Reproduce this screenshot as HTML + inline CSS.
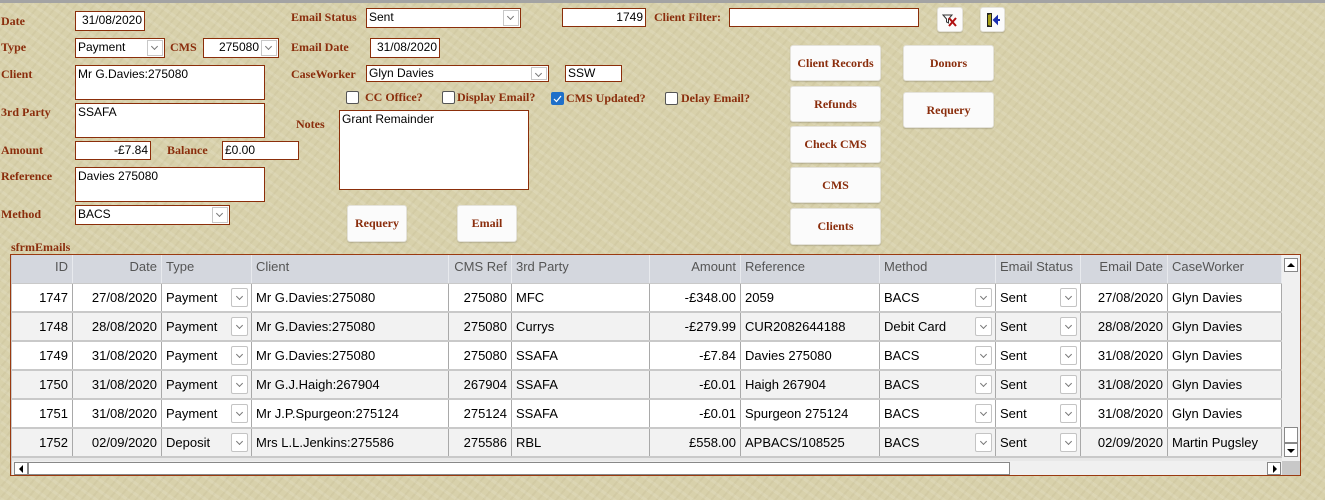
<!DOCTYPE html>
<html><head><meta charset="utf-8">
<style>
*{box-sizing:border-box;margin:0;padding:0}
body{width:1325px;height:500px;overflow:hidden;position:relative;background:#d8d1ab;font-family:"Liberation Sans",sans-serif;}
body:before{content:"";position:absolute;inset:0;background:repeating-linear-gradient(35deg,rgba(255,255,255,.10) 0 3px,rgba(0,0,0,0) 3px 9px),repeating-linear-gradient(-50deg,rgba(120,100,60,.06) 0 2px,rgba(0,0,0,0) 2px 7px);}
.a{position:absolute}
.lbl{position:absolute;font-family:"Liberation Serif",serif;font-weight:bold;font-size:12px;color:#8a2d0c;white-space:nowrap}
.box{position:absolute;background:#fff;border:1px solid #8b2e0a;font-size:12px;color:#000;padding:1px 2px;white-space:nowrap;overflow:hidden}
.r{text-align:right}
.dd{position:absolute;right:1px;top:1px;bottom:1px;width:16px;border:1px solid #c8c8c8;background:#fff}
.dd:after,.cdd:after{content:"";position:absolute;left:4px;top:3px;width:4px;height:4px;border-right:1px solid #777;border-bottom:1px solid #777;transform:rotate(45deg)}
.btn{position:absolute;background:#fbfbfb;border:1px solid #e4e2da;border-radius:3px;font-family:"Liberation Serif",serif;font-weight:bold;font-size:12px;color:#8a2d0c;display:flex;align-items:center;justify-content:center;box-shadow:0 1px 1px rgba(0,0,0,.15)}
.cb{position:absolute;width:13px;height:13px;background:#fff;border:1px solid #555;border-radius:2px}
.grid{position:absolute;left:10px;top:254px;width:1291px;height:222px;border:1px solid #9a3a10;background:#c9c9c9}
.row{position:absolute;left:1px;height:27px;display:flex;font-size:13px;color:#000}
.row div{border-right:1px solid #a9a9a9;height:100%;line-height:27px;padding:0 4px;white-space:nowrap;overflow:hidden;position:relative}
.hdr{top:0;height:28px;background:#d4d7de;color:#555}
.hdr div{line-height:24px;border-right:1px solid #e8eaee}
.cdd{position:absolute;right:3px;top:4px;width:17px;height:19px;border:1px solid #c4c4c4;background:#fff;border-radius:2px}
.cdd:after{left:5px;top:5px}
</style></head><body>
<div class="a" style="left:0;top:0;width:1325px;height:3px;background:#a3a3a3"></div>

<div class="lbl" style="left:1px;top:14px">Date</div>
<div class="box r" style="left:75px;top:11px;width:70px;height:20px">31/08/2020</div>
<div class="lbl" style="left:1px;top:40px">Type</div>
<div class="box" style="left:75px;top:38px;width:90px;height:20px">Payment<span class="dd"></span></div>
<div class="lbl" style="left:170px;top:40px">CMS</div>
<div class="box r" style="left:203px;top:38px;width:76px;height:20px;padding-right:19px">275080<span class="dd"></span></div>
<div class="lbl" style="left:1px;top:67px">Client</div>
<div class="box" style="left:75px;top:65px;width:190px;height:35px">Mr G.Davies:275080</div>
<div class="lbl" style="left:1px;top:105px">3rd Party</div>
<div class="box" style="left:75px;top:103px;width:190px;height:35px">SSAFA</div>
<div class="lbl" style="left:1px;top:143px">Amount</div>
<div class="box r" style="left:75px;top:141px;width:76px;height:19px">-£7.84</div>
<div class="lbl" style="left:167px;top:143px">Balance</div>
<div class="box" style="left:222px;top:141px;width:77px;height:19px">£0.00</div>
<div class="lbl" style="left:1px;top:169px">Reference</div>
<div class="box" style="left:75px;top:167px;width:190px;height:35px">Davies 275080</div>
<div class="lbl" style="left:1px;top:207px">Method</div>
<div class="box" style="left:75px;top:205px;width:155px;height:20px">BACS<span class="dd"></span></div>

<div class="lbl" style="left:291px;top:10px">Email Status</div>
<div class="box" style="left:366px;top:8px;width:155px;height:20px">Sent<span class="dd"></span></div>
<div class="box r" style="left:562px;top:8px;width:84px;height:19px">1749</div>
<div class="lbl" style="left:654px;top:10px">Client Filter:</div>
<div class="box" style="left:729px;top:8px;width:190px;height:19px"></div>
<div class="btn" style="left:937px;top:7px;width:26px;height:25px">
<svg width="16" height="14" viewBox="0 0 16 14"><path d="M1 2h9l-3.5 4v4l-2-1V6z" fill="none" stroke="#333" stroke-width="1"/><path d="M7 5l7 8M14 5l-7 8" stroke="#b01010" stroke-width="2"/></svg></div>
<div class="btn" style="left:980px;top:7px;width:25px;height:25px">
<svg width="16" height="16" viewBox="0 0 16 16"><rect x="2" y="1" width="5" height="14" fill="#222"/><path d="M3 3l3-1v12l-3-1z" fill="#a7a01a"/><path d="M9 8h6M9 8l3-3v6z" stroke="#1a2fb0" stroke-width="2" fill="#1a2fb0"/></svg></div>

<div class="lbl" style="left:291px;top:40px">Email Date</div>
<div class="box r" style="left:370px;top:38px;width:70px;height:20px">31/08/2020</div>
<div class="lbl" style="left:291px;top:67px">CaseWorker</div>
<div class="box" style="left:366px;top:65px;width:183px;height:17px;padding-top:0">Glyn Davies<span class="dd"></span></div>
<div class="box" style="left:565px;top:65px;width:57px;height:17px;padding-top:0">SSW</div>

<div class="cb" style="left:346px;top:91px"></div><div class="lbl" style="left:365px;top:90px">CC Office?</div>
<div class="cb" style="left:442px;top:91px"></div><div class="lbl" style="left:457px;top:90px">Display Email?</div>
<div class="cb" style="left:551px;top:92px;background:#1e6fc9;border-color:#1e6fc9"><svg width="11" height="11" viewBox="0 0 11 11" style="position:absolute;left:0;top:0"><path d="M2 6l2.5 2.5L9 3" stroke="#fff" stroke-width="1.2" fill="none"/></svg></div><div class="lbl" style="left:566px;top:91px">CMS Updated?</div>
<div class="cb" style="left:665px;top:92px"></div><div class="lbl" style="left:681px;top:91px">Delay Email?</div>

<div class="lbl" style="left:296px;top:117px">Notes</div>
<div class="box" style="left:339px;top:110px;width:190px;height:80px">Grant Remainder</div>

<div class="btn" style="left:347px;top:205px;width:60px;height:37px">Requery</div>
<div class="btn" style="left:457px;top:205px;width:60px;height:37px">Email</div>

<div class="btn" style="left:790px;top:45px;width:91px;height:36px">Client Records</div>
<div class="btn" style="left:790px;top:86px;width:91px;height:36px">Refunds</div>
<div class="btn" style="left:790px;top:126px;width:91px;height:37px">Check CMS</div>
<div class="btn" style="left:790px;top:167px;width:91px;height:36px">CMS</div>
<div class="btn" style="left:790px;top:208px;width:91px;height:37px">Clients</div>
<div class="btn" style="left:903px;top:45px;width:91px;height:36px">Donors</div>
<div class="btn" style="left:903px;top:92px;width:91px;height:36px">Requery</div>

<div class="lbl" style="left:11px;top:240px">sfrmEmails</div>

<div class="grid">
<div class="row hdr">
<div class="r" style="width:61px">ID</div><div class="r" style="width:89px">Date</div><div style="width:90px">Type</div><div style="width:197px">Client</div><div class="r" style="width:63px">CMS Ref</div><div style="width:138px">3rd Party</div><div class="r" style="width:91px">Amount</div><div style="width:139px">Reference</div><div style="width:116px">Method</div><div style="width:85px">Email Status</div><div class="r" style="width:87px">Email Date</div><div style="width:114px">CaseWorker</div>
</div>
<div class="row" style="top:29px;background:#fff"><div class="r" style="width:61px">1747</div><div class="r" style="width:89px">27/08/2020</div><div style="width:90px">Payment<span class="cdd"></span></div><div style="width:197px">Mr G.Davies:275080</div><div class="r" style="width:63px">275080</div><div style="width:138px">MFC</div><div class="r" style="width:91px">-£348.00</div><div style="width:139px">2059</div><div style="width:116px">BACS<span class="cdd"></span></div><div style="width:85px">Sent<span class="cdd"></span></div><div class="r" style="width:87px">27/08/2020</div><div style="width:114px">Glyn Davies</div></div>
<div class="row" style="top:58px;background:#f2f2f2"><div class="r" style="width:61px">1748</div><div class="r" style="width:89px">28/08/2020</div><div style="width:90px">Payment<span class="cdd"></span></div><div style="width:197px">Mr G.Davies:275080</div><div class="r" style="width:63px">275080</div><div style="width:138px">Currys</div><div class="r" style="width:91px">-£279.99</div><div style="width:139px">CUR2082644188</div><div style="width:116px">Debit Card<span class="cdd"></span></div><div style="width:85px">Sent<span class="cdd"></span></div><div class="r" style="width:87px">28/08/2020</div><div style="width:114px">Glyn Davies</div></div>
<div class="row" style="top:87px;background:#fff"><div class="r" style="width:61px">1749</div><div class="r" style="width:89px">31/08/2020</div><div style="width:90px">Payment<span class="cdd"></span></div><div style="width:197px">Mr G.Davies:275080</div><div class="r" style="width:63px">275080</div><div style="width:138px">SSAFA</div><div class="r" style="width:91px">-£7.84</div><div style="width:139px">Davies 275080</div><div style="width:116px">BACS<span class="cdd"></span></div><div style="width:85px">Sent<span class="cdd"></span></div><div class="r" style="width:87px">31/08/2020</div><div style="width:114px">Glyn Davies</div></div>
<div class="row" style="top:116px;background:#f2f2f2"><div class="r" style="width:61px">1750</div><div class="r" style="width:89px">31/08/2020</div><div style="width:90px">Payment<span class="cdd"></span></div><div style="width:197px">Mr G.J.Haigh:267904</div><div class="r" style="width:63px">267904</div><div style="width:138px">SSAFA</div><div class="r" style="width:91px">-£0.01</div><div style="width:139px">Haigh 267904</div><div style="width:116px">BACS<span class="cdd"></span></div><div style="width:85px">Sent<span class="cdd"></span></div><div class="r" style="width:87px">31/08/2020</div><div style="width:114px">Glyn Davies</div></div>
<div class="row" style="top:145px;background:#fff"><div class="r" style="width:61px">1751</div><div class="r" style="width:89px">31/08/2020</div><div style="width:90px">Payment<span class="cdd"></span></div><div style="width:197px">Mr J.P.Spurgeon:275124</div><div class="r" style="width:63px">275124</div><div style="width:138px">SSAFA</div><div class="r" style="width:91px">-£0.01</div><div style="width:139px">Spurgeon 275124</div><div style="width:116px">BACS<span class="cdd"></span></div><div style="width:85px">Sent<span class="cdd"></span></div><div class="r" style="width:87px">31/08/2020</div><div style="width:114px">Glyn Davies</div></div>
<div class="row" style="top:174px;background:#f2f2f2"><div class="r" style="width:61px">1752</div><div class="r" style="width:89px">02/09/2020</div><div style="width:90px">Deposit<span class="cdd"></span></div><div style="width:197px">Mrs L.L.Jenkins:275586</div><div class="r" style="width:63px">275586</div><div style="width:138px">RBL</div><div class="r" style="width:91px">£558.00</div><div style="width:139px">APBACS/108525</div><div style="width:116px">BACS<span class="cdd"></span></div><div style="width:85px">Sent<span class="cdd"></span></div><div class="r" style="width:87px">02/09/2020</div><div style="width:114px">Martin Pugsley</div></div>
<div class="a" style="left:1px;top:203px;width:1271px;height:3px;background:#e8e8e8"></div>
<!-- vertical scrollbar -->
<div class="a" style="left:1271px;top:0;width:18px;height:220px;background:#f0f0f0"></div>
<div class="a" style="left:1273px;top:3px;width:14px;height:14px;background:#fff;border:1px solid #888"><div style="margin:4px auto 0;width:0;height:0;border-left:4px solid transparent;border-right:4px solid transparent;border-bottom:4px solid #000"></div></div>
<div class="a" style="left:1273px;top:172px;width:14px;height:16px;background:#fff;border:1px solid #888"></div>
<div class="a" style="left:1273px;top:188px;width:14px;height:14px;background:#fff;border:1px solid #888"><div style="margin:5px auto 0;width:0;height:0;border-left:4px solid transparent;border-right:4px solid transparent;border-top:4px solid #000"></div></div>
<!-- horizontal scrollbar -->
<div class="a" style="left:1px;top:206px;width:1270px;height:14px;background:#f0f0f0"></div>
<div class="a" style="left:3px;top:207px;width:14px;height:13px;background:#fff;border:1px solid #888"><div style="margin:2px 0 0 4px;width:0;height:0;border-top:4px solid transparent;border-bottom:4px solid transparent;border-right:4px solid #000"></div></div>
<div class="a" style="left:17px;top:207px;width:982px;height:13px;background:#fff;border:1px solid #888"></div>
<div class="a" style="left:1256px;top:207px;width:14px;height:13px;background:#fff;border:1px solid #888"><div style="margin:2px 0 0 5px;width:0;height:0;border-top:4px solid transparent;border-bottom:4px solid transparent;border-left:4px solid #000"></div></div>
<div class="a" style="left:1271px;top:206px;width:18px;height:14px;background:#c8c8c8"></div>
</div>
</body></html>
